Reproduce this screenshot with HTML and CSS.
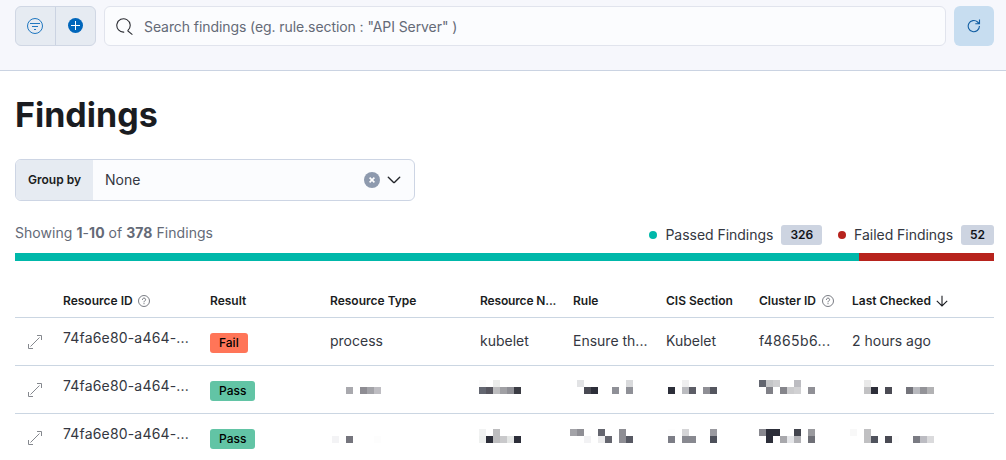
FILE: index.html
```html
<!DOCTYPE html>
<html lang="en">
<head>
<meta charset="utf-8">
<title>Findings</title>
<link rel="stylesheet" href="styles.css">
</head>
<body>
<header class="topbar">
  <div class="filter-group">
    <button class="filter-btn" aria-label="Saved queries">
      <svg width="16" height="16" viewBox="0 0 16 16" fill="none" stroke="#1f77c0"><circle cx="8" cy="8" r="7.5"/><path d="M3 5.5h10M5 8.5h6M7 11.5h2"/></svg>
    </button>
    <button class="filter-btn" aria-label="Add filter">
      <svg width="16" height="16" viewBox="0 0 16 16"><circle cx="7.5" cy="7.5" r="7.5" fill="#0066bb"/><path d="M3 7.5h9M7.5 3v9" stroke="#fff" fill="none"/></svg>
    </button>
  </div>
  <div class="search">
    <svg width="18" height="18" viewBox="0 0 18 18" fill="none" stroke="#2b2d33" stroke-width="1.1"><path d="M8.2 14.1A6.7 6.7 0 1 1 12 12.4Q11.6 13.2 12.6 13.5L16.4 16.6"/></svg>
    <span class="search-text">Search findings (eg. rule.section : "API Server" )</span>
  </div>
  <button class="refresh" aria-label="Refresh">
    <svg width="14" height="14" viewBox="0 0 14 14" fill="none" stroke="#135fa3" stroke-width="1.1"><path d="M12.4 7A5.6 5.6 0 1 1 10.6 3L12 4.5M12.5 .5v4.2H8.3"/></svg>
  </button>
</header>
<main class="page">
  <h1 class="title">Findings</h1>
  <div class="groupby">
    <span class="groupby-label">Group by</span>
    <span class="groupby-value">None</span>
    <svg class="clear" width="16" height="16" viewBox="0 0 16 16"><circle cx="8" cy="8" r="8" fill="#8e9aae"/><path d="M5.6 5.6l4.8 4.8M10.4 5.6l-4.8 4.8" stroke="#fff" stroke-width="1.6"/></svg>
    <svg class="caret" width="14" height="16" viewBox="0 0 14 16" fill="none" stroke="#24262b" stroke-width="1.4" stroke-linecap="round" stroke-linejoin="round"><path d="M1.3 5.3l5.3 5.1a.6.6 0 0 0 .8 0l5.3-5.1"/></svg>
  </div>
  <div class="summary">
    <span class="showing">Showing <b>1</b>-<b>10</b> of <b>378</b> Findings</span>
    <span class="stat passed">Passed Findings<span class="count">326</span></span>
    <span class="stat failed">Failed Findings<span class="count">52</span></span>
  </div>
  <div class="bar"><div class="bar-pass"></div><div class="bar-fail"></div></div>

  <section class="table">
    <div class="row head">
      <div></div>
      <div>Resource ID <svg class="help" width="12" height="12" viewBox="0 0 12 12" fill="none" stroke="#6b6e76"><circle cx="6" cy="6" r="5.5" stroke-width=".9"/><path d="M4.4 4.8C4.4 2.6 7.6 2.6 7.6 4.6C7.6 5.8 6 5.9 6 7.3M6 8.2v1"/></svg></div>
      <div>Result</div>
      <div>Resource Type</div>
      <div><span class="clip">Resource N...</span></div>
      <div>Rule</div>
      <div>CIS Section</div>
      <div>Cluster ID <svg class="help wide" width="12" height="12" viewBox="0 0 12 12" fill="none" stroke="#6b6e76"><circle cx="6" cy="6" r="5.5" stroke-width=".9"/><path d="M4.4 4.8C4.4 2.6 7.6 2.6 7.6 4.6C7.6 5.8 6 5.9 6 7.3M6 8.2v1"/></svg></div>
      <div>Last Checked <svg class="sort" width="12" height="12" viewBox="0 0 12 12" fill="none" stroke="#1a1c21" stroke-width="1.1"><path d="M6 .8v10M.8 5.8L6 11l5.2-5.2"/></svg></div>
    </div>

    <div class="row">
      <div class="expand"><svg width="14" height="14" viewBox="0 0 14 14" fill="none" stroke="#85888e"><path d="M9 .5h4.5V5M5 13.5H.5V9M2.5 11.5l9-9"/></svg></div>
      <div class="rid">74fa6e80-a464-...</div>
      <div><span class="badge fail">Fail</span></div>
      <div>process</div>
      <div>kubelet</div>
      <div>Ensure th...</div>
      <div>Kubelet</div>
      <div><span class="hash">f4865b6...</span></div>
      <div>2 hours ago</div>
    </div>

    <div class="row">
      <div class="expand"><svg width="14" height="14" viewBox="0 0 14 14" fill="none" stroke="#85888e"><path d="M9 .5h4.5V5M5 13.5H.5V9M2.5 11.5l9-9"/></svg></div>
      <div class="rid">74fa6e80-a464-...</div>
      <div><span class="badge pass">Pass</span></div>
      <div><svg class="mosaic m-type" viewBox="0 0 12 2"><rect x="2" y="1" fill="#a9a9ae"/><rect x="4" y="1" fill="#8e8d93"/><rect x="5" y="1" fill="#a3a3a8"/><rect x="6" y="1" fill="#bebdc2"/></svg></div>
      <div><svg class="mosaic m-name" viewBox="0 0 12 2"><rect x="0" y="0" fill="#fbfbfb"/><rect x="2" y="0" fill="#ebeceb"/><rect x="0" y="1" fill="#636670"/><rect x="1" y="1" fill="#57565f"/><rect x="2" y="1" fill="#bdbdbf"/><rect x="3" y="1" fill="#a0a0a4"/><rect x="4" y="1" fill="#8f8f95"/><rect x="5" y="1" fill="#3a3b43"/></svg></div>
      <div><svg class="mosaic m-rule" viewBox="0 0 12 2"><rect x="1" y="0" fill="#e2e3e5"/><rect x="8" y="0" fill="#d9dadc"/><rect x="2" y="1" fill="#494a53"/><rect x="3" y="1" fill="#2c2e39"/><rect x="6" y="1" fill="#8f9097"/><rect x="8" y="1" fill="#8f9097"/></svg></div>
      <div><svg class="mosaic m-cis" viewBox="0 0 12 2"><rect x="2" y="0" fill="#efeff0"/><rect x="0" y="1" fill="#2c2e39"/><rect x="2" y="1" fill="#bbbcc0"/><rect x="3" y="1" fill="#5c5d66"/><rect x="5" y="1" fill="#8f8f95"/><rect x="6" y="1" fill="#54565f"/></svg></div>
      <div><svg class="mosaic" viewBox="0 0 12 2"><rect x="0" y="0" fill="#62656f"/><rect x="1" y="0" fill="#c5c6c8"/><rect x="2" y="0" fill="#cfcfd1"/><rect x="5" y="0" fill="#bcbcc1"/><rect x="1" y="1" fill="#808087"/><rect x="3" y="1" fill="#85858b"/><rect x="4" y="1" fill="#cbcbcd"/><rect x="5" y="1" fill="#d1d1d3"/><rect x="7" y="1" fill="#909096"/></svg></div>
      <div><svg class="mosaic m-last" viewBox="0 0 12 2"><rect x="2" y="0" fill="#e9e9e9"/><rect x="2" y="1" fill="#c2c2c4"/><rect x="3" y="1" fill="#2c2e39"/><rect x="5" y="1" fill="#4b4b54"/><rect x="8" y="1" fill="#74747b"/><rect x="9" y="1" fill="#b8b9be"/><rect x="10" y="1" fill="#939398"/><rect x="11" y="1" fill="#b2b2b4"/></svg></div>
    </div>

    <div class="row last">
      <div class="expand"><svg width="14" height="14" viewBox="0 0 14 14" fill="none" stroke="#85888e"><path d="M9 .5h4.5V5M5 13.5H.5V9M2.5 11.5l9-9"/></svg></div>
      <div class="rid">74fa6e80-a464-...</div>
      <div><span class="badge pass">Pass</span></div>
      <div><svg class="mosaic m-type" viewBox="0 0 12 2"><rect x="0" y="1" fill="#f3f3f5"/><rect x="2" y="1" fill="#75757d"/><rect x="6" y="1" fill="#fdfdfd"/></svg></div>
      <div><svg class="mosaic m-name" viewBox="0 0 12 2"><rect x="0" y="0" fill="#f1f2f2"/><rect x="2" y="0" fill="#bdbdbf"/><rect x="0" y="1" fill="#eef0ef"/><rect x="1" y="1" fill="#2c2e39"/><rect x="2" y="1" fill="#bdbdbf"/><rect x="3" y="1" fill="#c9c9cb"/><rect x="4" y="1" fill="#e4e6e5"/><rect x="5" y="1" fill="#2c2e39"/></svg></div>
      <div><svg class="mosaic m-rule" viewBox="0 0 12 2"><rect x="0" y="0" fill="#a3a3a8"/><rect x="1" y="0" fill="#8f8f95"/><rect x="4" y="0" fill="#65666f"/><rect x="7" y="0" fill="#8e8e94"/><rect x="2" y="1" fill="#f2f2f4"/><rect x="4" y="1" fill="#ededee"/><rect x="5" y="1" fill="#65666f"/><rect x="7" y="1" fill="#8e8e94"/><rect x="8" y="1" fill="#575963"/></svg></div>
      <div><svg class="mosaic m-cis" viewBox="0 0 12 2"><rect x="0" y="0" fill="#fdfdfd"/><rect x="2" y="0" fill="#d5d5d7"/><rect x="6" y="0" fill="#9a9aa0"/><rect x="0" y="1" fill="#7c7d86"/><rect x="2" y="1" fill="#888990"/><rect x="3" y="1" fill="#888990"/><rect x="6" y="1" fill="#4d505a"/></svg></div>
      <div><svg class="mosaic" viewBox="0 0 12 2"><rect x="0" y="0" fill="#88888f"/><rect x="1" y="0" fill="#2c2e39"/><rect x="2" y="0" fill="#2c2e39"/><rect x="5" y="0" fill="#43454e"/><rect x="7" y="0" fill="#9a9a9e"/><rect x="1" y="1" fill="#2c2e39"/><rect x="3" y="1" fill="#a8a8ac"/><rect x="4" y="1" fill="#e5e6e9"/><rect x="5" y="1" fill="#b2b2b6"/><rect x="7" y="1" fill="#6e6f76"/></svg></div>
      <div><svg class="mosaic m-last" viewBox="0 0 12 2"><rect x="0" y="0" fill="#f8f8f8"/><rect x="2" y="0" fill="#c0c0c2"/><rect x="2" y="1" fill="#c0c0c2"/><rect x="3" y="1" fill="#50535d"/><rect x="5" y="1" fill="#494a53"/><rect x="6" y="1" fill="#fcfcfc"/><rect x="9" y="1" fill="#7a7b83"/><rect x="10" y="1" fill="#bcbcc2"/><rect x="11" y="1" fill="#dadadc"/></svg></div>
    </div>
  </section>
</main>
</body>
</html>
```
FILE: styles.css
```css
* { box-sizing: border-box; }
body {
  margin: 0;
  height: 460px;
  overflow: hidden;
  background: #fff;
  color: #343741;
  font: 14px/20px Inter, "Liberation Sans", sans-serif;
}
svg { display: block; flex: none; }
button { margin: 0; padding: 0; border: 0; background: none; }

.topbar {
  display: flex;
  gap: 8px;
  height: 71px;
  padding: 6px 12px 0 15px;
  background: #f6f7fc;
  border-bottom: 1px solid #cad3e2;
}
.filter-group {
  display: flex;
  width: 81px;
  height: 40px;
  border: 1px solid #d0d7e4;
  border-radius: 6px;
  background: #e6ebf2;
}
.filter-btn {
  display: flex;
  flex: 1;
  align-items: center;
  justify-content: flex-start;
  padding-left: 11px;
}
.filter-btn + .filter-btn {
  padding-left: 12px;
  border-left: 1px solid #cbd3e2;
}
.search {
  display: flex;
  flex: 1;
  align-items: center;
  gap: 10px;
  height: 40px;
  padding-left: 11px;
  padding-top: 1px;
  border: 1px solid #e1e4ed;
  border-radius: 6px;
  background: #fbfcfe;
  color: #646a77;
}
.search-text { letter-spacing: -.08px; }
.refresh {
  display: flex;
  align-items: center;
  justify-content: center;
  width: 40px;
  height: 40px;
  border-radius: 6px;
  background: #c7ddf0;
}

.page { padding: 24px 12px 0 15px; }
.title {
  margin: 0;
  color: #1a1c21;
  font-size: 34px;
  font-weight: 700;
  line-height: 40px;
}
.groupby {
  display: flex;
  align-items: center;
  width: 400px;
  height: 42px;
  margin-top: 24px;
  padding-right: 13px;
  overflow: hidden;
  border: 1px solid #cdd5e4;
  border-radius: 6px;
  background: #fbfcfe;
}
.groupby-label {
  width: 77px;
  padding-left: 12px;
  background: #e6ebf2;
  color: #1a1c21;
  font-size: 12px;
  font-weight: 600;
  line-height: 40px;
}
.groupby-value { flex: 1; padding-left: 12px; }
.caret { margin-left: 7px; }

.summary {
  display: flex;
  align-items: center;
  height: 24px;
  margin-top: 22px;
}
.showing { flex: 1; margin-top: -4px; color: #646a77; letter-spacing: .05px; }
.showing b { font-weight: 700; }
.stat { display: flex; align-items: center; letter-spacing: -.03px; }
.stat::before {
  content: "";
  width: 8px;
  height: 8px;
  margin-right: 8px;
  border-radius: 50%;
}
.passed::before { background: #00b8aa; }
.failed::before { background: #b7231d; }
.failed { margin-left: 16px; }
.count {
  margin-left: 8px;
  padding: 0 9px;
  border-radius: 3px;
  background: #cdd4e1;
  color: #111318;
  font-size: 12px;
  font-weight: 600;
}
.bar { display: flex; height: 8px; margin-top: 6px; }
.bar-pass { flex: 326; background: #00b8aa; }
.bar-fail { flex: 52; background: #b7231d; }

.table { margin-top: 24px; }
.row {
  display: grid;
  grid-template-columns: 40px 147px 120px 150px repeat(4, 93px) 150px;
  height: 48px;
  border-bottom: 1px solid #cbd6e2;
}
.row > div {
  display: flex;
  align-items: center;
  padding: 0 0 1px 8px;
  white-space: nowrap;
}
.row.head {
  height: 33px;
  color: #1a1c21;
  font-size: 12px;
  font-weight: 600;
}
.row.head > div { padding-bottom: 0; }
.clip { letter-spacing: -.15px; }
.last { border-bottom-color: transparent; }
.help { margin-left: 5px; }
.help.wide { margin-left: 6px; }
.sort { margin-left: 5.5px; }
.row > .expand { padding: 1px 0 0 13px; }
.row > .rid { padding-bottom: 8px; letter-spacing: .18px; }
.hash { letter-spacing: .35px; }
.badge {
  margin-top: 4px;
  padding: 0 9px;
  border-radius: 3px;
  color: #000;
  font-size: 12px;
  font-weight: 500;
}
.fail { background: #ff7558; }
.pass { background: #62c4a5; }

/* Redacted cells: 7px blocks */
.mosaic {
  width: 84px;
  height: 14px;
  margin-bottom: 4px;
  shape-rendering: crispEdges;
}
.mosaic rect { width: 1px; height: 1px; }
.last .mosaic { margin-bottom: 2px; }
.m-type { margin-left: 2px; }
.m-name { margin-left: -1px; }
.m-rule { margin-left: -3px; }
.m-cis { margin-left: 2px; }
.m-last { margin-left: -2px; }
```
